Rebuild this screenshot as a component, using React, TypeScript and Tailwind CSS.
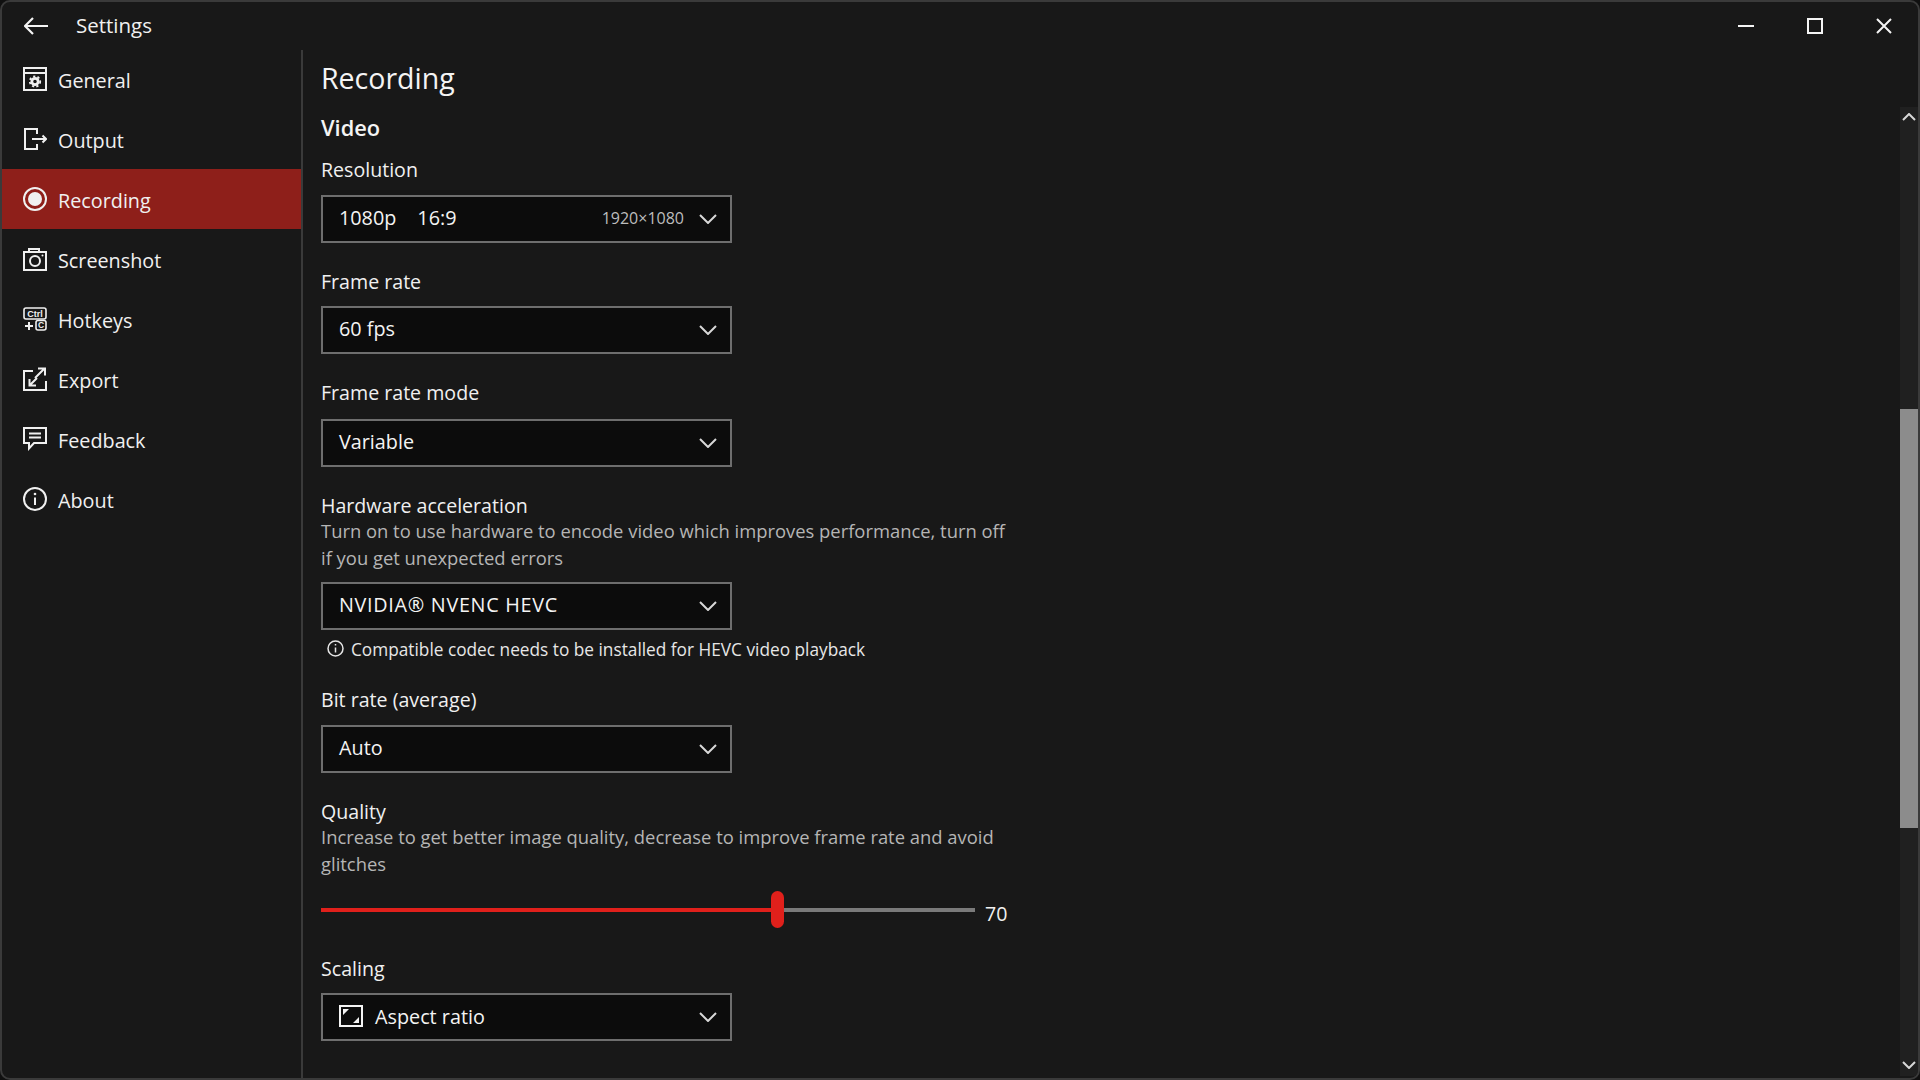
import type { ReactNode } from 'react';

const Chevron = () => (
  <svg width="18" height="10" viewBox="0 0 18 10" fill="none" stroke="#d8d8d8" strokeWidth="2" className="shrink-0">
    <path d="M1 1l8 8 8-8" />
  </svg>
);

const NavIcon = ({ children }: { children: ReactNode }) => (
  <svg width="24" height="24" viewBox="0 0 24 24" fill="none" stroke="currentColor" strokeWidth="2" className="shrink-0">
    {children}
  </svg>
);

const navItems: { label: string; icon: ReactNode }[] = [
  {
    label: 'General',
    icon: (
      <>
        <rect x="1" y="1" width="22" height="22" />
        <path d="M1 6h22" />
        <circle cx="12" cy="14.500" r="3.200" strokeWidth="2.800" />
        <circle cx="12" cy="14.500" r="5.200" strokeWidth="1.800" strokeDasharray="2.200 2.200" />
      </>
    ),
  },
  {
    label: 'Output',
    icon: (
      <>
        <path d="M14 7V2H2v20h12v-5" />
        <path d="M9 12h14M19.500 8.500L23 12l-3.500 3.500" />
      </>
    ),
  },
  {
    label: 'Recording',
    icon: (
      <>
        <circle cx="12" cy="12" r="11" />
        <circle cx="12" cy="12" r="7" fill="currentColor" stroke="none" />
      </>
    ),
  },
  {
    label: 'Screenshot',
    icon: (
      <>
        <rect x="1" y="5" width="22" height="18" />
        <path d="M6 5V2h10v3" />
        <circle cx="12" cy="14" r="5" />
        <circle cx="19.500" cy="8.500" r="1" fill="currentColor" stroke="none" />
      </>
    ),
  },
  {
    label: 'Hotkeys',
    icon: (
      <>
        <rect x="1" y="1" width="22" height="11" rx="2" strokeWidth="1.600" />
        <text x="12" y="9.800" textAnchor="middle" fontSize="9" fontWeight="700" fill="currentColor" stroke="none" fontFamily="'Liberation Sans', sans-serif">
          Ctrl
        </text>
        <path d="M2 19h8M6 15v8" />
        <rect x="13" y="13.500" width="10" height="9.500" rx="2" strokeWidth="1.600" />
        <text x="18" y="21.200" textAnchor="middle" fontSize="8.500" fontWeight="700" fill="currentColor" stroke="none" fontFamily="'Liberation Sans', sans-serif">
          C
        </text>
      </>
    ),
  },
  {
    label: 'Export',
    icon: (
      <>
        <path d="M10 4H1v19h22v-9" />
        <path d="M12 11l9-9M15 1.500h7v7" />
        <path d="M14 11l-7 7M6.500 12v6.500h6.500" />
      </>
    ),
  },
  {
    label: 'Feedback',
    icon: (
      <>
        <path d="M1 1h22v15H11l-5 5.500V16H1z" />
        <path d="M6 6.500h12M6 10.500h12" />
      </>
    ),
  },
  {
    label: 'About',
    icon: (
      <>
        <circle cx="12" cy="12" r="11" />
        <path d="M12 10.500V18" />
        <circle cx="12" cy="7" r="1.300" fill="currentColor" stroke="none" />
      </>
    ),
  },
];

const Select = ({ children }: { children: ReactNode }) => (
  <div className="w-[411px] h-[48px] flex items-center pl-[16px] pr-[13px] bg-[#0c0c0c] border-2 border-[#6e6e6e] text-[19.800px] text-[#f4f4f4]">
    <div className="flex-1 flex items-center min-w-0 pb-[2px]">{children}</div>
    <Chevron />
  </div>
);

const Label = ({ children, className }: { children: ReactNode; className: string }) => (
  <div className={`h-[24px] leading-[24px] text-[19.600px] text-[#f0f0f0] ${className}`}>{children}</div>
);

const Desc = ({ children }: { children: ReactNode }) => (
  <div className="-mt-px text-[18.400px] leading-[27px] text-[#b5b5b5] whitespace-nowrap">{children}</div>
);

export default function App() {
  return (
    <div className="w-[1920px] h-[1080px] bg-[#101010] overflow-hidden" style={{ fontFamily: "'Open Sans', 'Liberation Sans', sans-serif" }}>
      <div className="w-full h-full flex flex-col bg-[#181818] border-2 border-[#3a3a3a] rounded-[10px] overflow-hidden text-white">
        {/* Title bar */}
        <div className="h-[48px] shrink-0 flex items-center pl-[22px] pr-[26px]">
          <svg width="24" height="20" viewBox="0 0 24 20" fill="none" stroke="#f4f4f4" strokeWidth="2.200" className="shrink-0">
            <path d="M1 10h23M9 2l-8 8 8 8" />
          </svg>
          <span className="ml-[28px] mb-px text-[20.500px] text-[#f0f0f0]">Settings</span>
          <div className="ml-auto flex items-center gap-[53px]">
            <svg width="16" height="16" viewBox="0 0 16 16" stroke="#f4f4f4" strokeWidth="2">
              <path d="M0 8h16" />
            </svg>
            <svg width="16" height="16" viewBox="0 0 16 16" fill="none" stroke="#f4f4f4" strokeWidth="2">
              <rect x="1" y="1" width="14" height="14" />
            </svg>
            <svg width="16" height="16" viewBox="0 0 16 16" stroke="#f4f4f4" strokeWidth="2">
              <path d="M1 1l14 14M15 1L1 15" />
            </svg>
          </div>
        </div>

        <div className="flex-1 flex min-h-0">
          {/* Sidebar */}
          <nav className="w-[301px] shrink-0 border-r-2 border-[#3a3a3a]">
            <div className="-mt-px">
              {navItems.map((item) => (
                <div
                  key={item.label}
                  className={`h-[60px] flex items-center pl-[21px] gap-[11px] text-[19.800px] text-[#f0f0f0] ${
                    item.label === 'Recording' ? 'bg-[#8e1f1a]' : ''
                  }`}
                >
                  <NavIcon>{item.icon}</NavIcon>
                  <span className="mt-[4px]">{item.label}</span>
                </div>
              ))}
            </div>
          </nav>

          {/* Content */}
          <main className="flex-1 pl-[18px] min-w-0">
            <h1 className="mt-[8px] h-[40px] leading-[40px] text-[28.500px] text-[#f4f4f4]">Recording</h1>
            <h2 className="mt-[15px] h-[30px] leading-[30px] text-[21.800px] font-semibold text-[#f4f4f4]">Video</h2>

            <Label className="mt-[15px] mb-[13px]">Resolution</Label>
            <Select>
              <span>1080p</span>
              <span className="ml-[21px]">16:9</span>
              <span className="ml-auto mr-[15px] text-[16px] text-[#bdbdbd]">1920×1080</span>
            </Select>

            <Label className="mt-[27px] mb-[12px]">Frame rate</Label>
            <Select>60 fps</Select>

            <Label className="mt-[27px] mb-[14px]">Frame rate mode</Label>
            <Select>Variable</Select>

            <Label className="mt-[27px]">Hardware acceleration</Label>
            <Desc>
              Turn on to use hardware to encode video which improves performance, turn off
              <br />
              if you get unexpected errors
            </Desc>
            <div className="mt-[11px]">
              <Select>
                <span className="tracking-[0.700px]">NVIDIA® NVENC HEVC</span>
              </Select>
            </div>
            <div className="mt-[8px] h-[24px] flex items-center pl-[6px] gap-[7px] text-[17.250px] text-[#e6e6e6]">
              <svg width="17" height="17" viewBox="0 0 17 17" fill="none" stroke="#e6e6e6" strokeWidth="1.500" className="shrink-0 -mt-[4px]">
                <circle cx="8.500" cy="8.500" r="7.500" />
                <path d="M8.500 7.500v5M8.500 4v1.500" />
              </svg>
              <span>Compatible codec needs to be installed for HEVC video playback</span>
            </div>

            <Label className="mt-[26px] mb-[13px]">Bit rate (average)</Label>
            <Select>Auto</Select>

            <Label className="mt-[27px]">Quality</Label>
            <Desc>
              Increase to get better image quality, decrease to improve frame rate and avoid
              <br />
              glitches
            </Desc>
            <div className="mt-[14px] h-[37px] flex items-center">
              <div className="relative w-[654px] h-[4px] bg-[#7a7a7a]">
                <div className="w-[456px] h-full bg-[#e0201b]" />
                <div className="absolute left-[450px] top-[-17px] w-[13px] h-[37px] rounded-full bg-[#e0201b]" />
              </div>
              <span className="ml-[10px] mt-[9px] text-[19.600px] text-[#f0f0f0]">70</span>
            </div>

            <Label className="mt-[29px] mb-[12px]">Scaling</Label>
            <Select>
              <svg width="24" height="22" viewBox="0 0 24 22" className="shrink-0 mr-[12px]">
                <rect x="1" y="1" width="22" height="20" fill="none" stroke="#f4f4f4" strokeWidth="2" />
                <path d="M4 4h6L4 10zM20 18h-6l6-6z" fill="#f4f4f4" />
              </svg>
              <span className="mt-[2px]">Aspect ratio</span>
            </Select>
          </main>

          {/* Scrollbar */}
          <div className="w-[18px] shrink-0 mt-[57px] mb-[2px] bg-[#202020] flex flex-col items-center">
            <div className="h-[20px] shrink-0 flex items-center justify-center">
              <svg width="14" height="8" viewBox="0 0 14 8" fill="none" stroke="#d8d8d8" strokeWidth="2">
                <path d="M1 7l6-6 6 6" />
              </svg>
            </div>
            <div className="h-[282px] shrink-0" />
            <div className="w-full h-[419px] shrink-0 bg-[#8c8c8c]" />
            <div className="flex-1" />
            <div className="h-[22px] shrink-0 flex items-center justify-center">
              <svg width="14" height="8" viewBox="0 0 14 8" fill="none" stroke="#d8d8d8" strokeWidth="2">
                <path d="M1 1l6 6 6-6" />
              </svg>
            </div>
          </div>
        </div>
      </div>
    </div>
  );
}
